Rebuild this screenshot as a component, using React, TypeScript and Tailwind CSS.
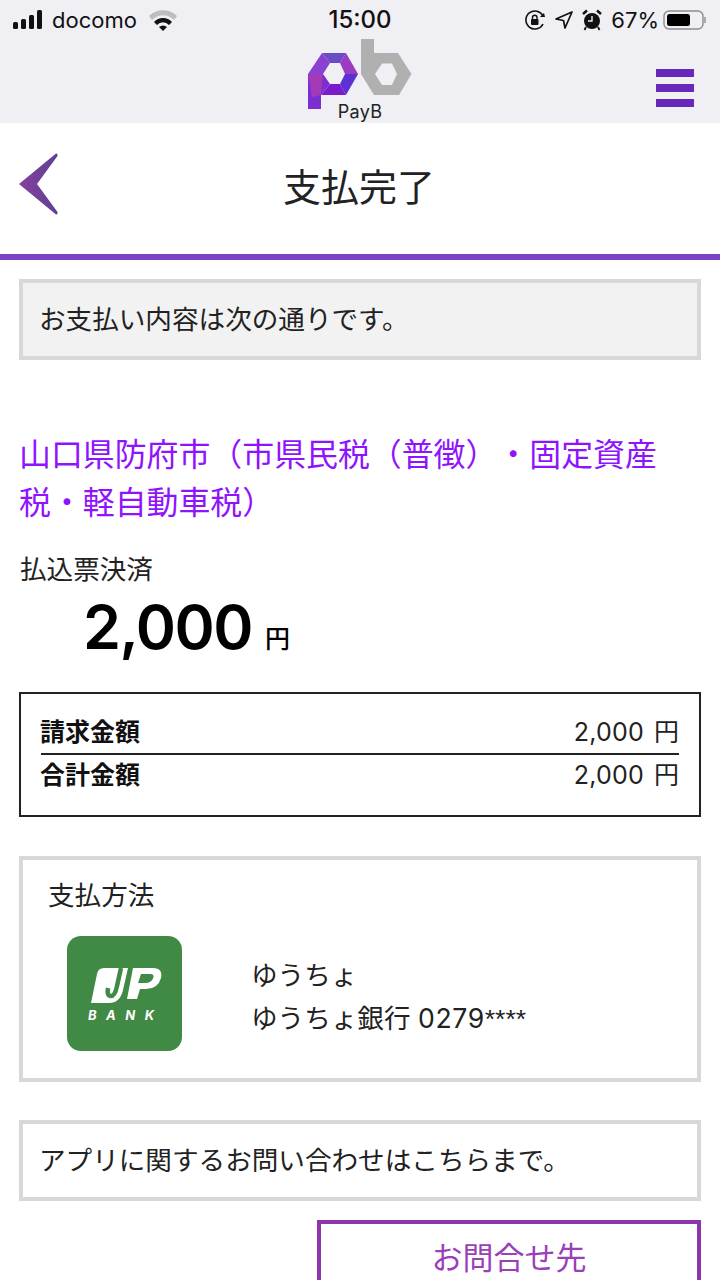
const jp = "font-['Inter','Noto_Sans_CJK_JP',sans-serif] [text-spacing-trim:space-all]";

function StatusBar() {
  return (
    <div className="flex h-[40px] items-center justify-between pl-[13px] pr-[13px] text-[22px] text-[#111]">
      <div className="flex w-[270px] items-center">
        <svg width="32" height="20" viewBox="0 0 32 20" className="mr-[7px]">
          <rect x="0" y="12" width="5" height="7" rx="1.5" fill="#111" />
          <rect x="8" y="9" width="5" height="10" rx="1.5" fill="#111" />
          <rect x="16" y="5" width="5" height="14" rx="1.5" fill="#111" />
          <rect x="24" y="0" width="5" height="19" rx="1.5" fill="#111" />
        </svg>
        <span className="mr-[11px] leading-none">docomo</span>
        <svg width="30" height="22" viewBox="0 0 30 22">
          <path d="M1 7 A20 20 0 0 1 29 7 L26 11 A15 15 0 0 0 4 11 Z" fill="#bdbdbd" />
          <path d="M6 13 A12 12 0 0 1 24 13 L21 16 A8 8 0 0 0 9 16 Z" fill="#111" />
          <path d="M11 18 A6 6 0 0 1 19 18 L15 22 Z" fill="#111" />
        </svg>
      </div>
      <div className="text-[24px] font-medium leading-none">15:00</div>
      <div className="flex w-[270px] items-center justify-end">
        <svg width="22" height="22" viewBox="0 0 22 22" className="mr-[8px]">
          <path d="M19 15 A9 9 0 1 1 19 7" fill="none" stroke="#111" strokeWidth="1.6" />
          <path d="M16 8 L21 8 L20 4 Z" fill="#111" />
          <rect x="7" y="10" width="7.5" height="6" rx="1" fill="#111" />
          <path d="M8.5 10 V8.5 A2.2 2.2 0 0 1 13 8.5 V10" fill="none" stroke="#111" strokeWidth="1.4" />
        </svg>
        <svg width="20" height="20" viewBox="0 0 20 20" className="mr-[8px]">
          <path d="M18 2 L11 18 L9.5 10.5 L2 9 Z" fill="none" stroke="#111" strokeWidth="1.7" strokeLinejoin="round" />
        </svg>
        <svg width="20" height="22" viewBox="0 0 20 22" className="mr-[9px]">
          <circle cx="10" cy="12" r="8" fill="#111" />
          <path d="M1 5 L5 1.5 M19 5 L15 1.5" stroke="#111" strokeWidth="2.4" />
          <path d="M10 7 V12 H6" fill="none" stroke="#efeff4" strokeWidth="1.4" />
          <path d="M4 18 L2.5 21 M16 18 L17.5 21" stroke="#111" strokeWidth="1.8" />
        </svg>
        <span className="mr-[4px] leading-none">67%</span>
        <svg width="44" height="22" viewBox="0 0 44 22">
          <rect x="1" y="2" width="39" height="18" rx="5" fill="none" stroke="#8e8e8e" strokeWidth="1.4" />
          <rect x="4" y="5" width="23" height="12" rx="2.5" fill="#000" />
          <path d="M42 8 V14" stroke="#9a9a9a" strokeWidth="1.6" />
        </svg>
      </div>
    </div>
  );
}

function Logo() {
  return (
    <div className="relative h-[84px] w-[106px]">
      <svg width="106" height="72" viewBox="0 0 106 72">
        {/* p, made of flat facets */}
        <polygon points="15,14 39,14 33,24 23,24" fill="#6a4cc6" />
        <polygon points="39,14 51,35 38,35 33,24" fill="#9a3cc2" />
        <polygon points="51,35 39,56 33,45 38,35" fill="#5c30d2" />
        <polygon points="39,56 14,56 23,45 33,45" fill="#7a1ccc" />
        <polygon points="15,14 23,24 16,35 1,35" fill="#8a40d0" />
        <polygon points="1,35 16,35 23,45 14,56 14,70 1,70" fill="#7a2fd0" />
        <polygon points="1,35 16,35 14,56 5,58" fill="#a53ab8" />
        {/* b */}
        <path
          fillRule="evenodd"
          d="M54 0 H67 V14 H91 L104.5 35 L92 56 H67 L54 35 Z M68 35 L75 46 H85 L90 35 L85 24.5 H75 Z"
          fill="#b0b0b0"
        />
      </svg>
      <div className="absolute left-0 right-0 top-[63px] text-center font-['Inter',sans-serif] text-[18px] leading-[20px] tracking-[0.3px] text-[#222]">
        PayB
      </div>
    </div>
  );
}

function Info({ children, grey }: { children: React.ReactNode; grey?: boolean }) {
  return (
    <div className={`flex h-[81px] items-center border-4 border-[#d8d8d8] pl-[16px] text-[26.6px] text-[#222] ${grey ? "bg-[#f2f2f2]" : "bg-white"}`}>
      {children}
    </div>
  );
}

export default function App() {
  return (
    <div className={`h-[1280px] w-[720px] overflow-hidden bg-white ${jp}`}>
      <div className="h-[123px] bg-[#efeff4]">
        <StatusBar />
        <div className="relative flex justify-center">
          <div className="absolute left-[307px] top-[-1px]">
            <Logo />
          </div>
          <div className="absolute right-[26px] top-[29px] flex w-[38px] flex-col gap-[7px]">
            <div className="h-[8px] bg-[#6528b8]" />
            <div className="h-[8px] bg-[#6528b8]" />
            <div className="h-[8px] bg-[#6528b8]" />
          </div>
        </div>
      </div>

      <div className="relative flex h-[137px] items-center justify-center border-b-[6px] border-[#7b44c2] pb-[3px] pr-[2px] text-[38px] text-[#222]">
        <svg width="40" height="62" viewBox="0 0 40 62" className="absolute left-[19px] top-[30px]">
          <defs>
            <linearGradient id="bk" x1="0" y1="0" x2="1" y2="0">
              <stop offset="0" stopColor="#88409a" />
              <stop offset="1" stopColor="#5f4097" />
            </linearGradient>
          </defs>
          <path d="M0 31 L37 0.5 Q39 0.5 38.5 3 L18 31 L38.5 59 Q39 61.5 37 61.5 Z" fill="url(#bk)" />
        </svg>
        支払完了
      </div>

      <div className="flex flex-col px-[19px] pt-[19px]">
        <Info grey>お支払い内容は次の通りです。</Info>

        <div className="mt-[71px] text-[31.9px] leading-[48px] text-[#9013fe]">
          山口県防府市（市県民税（普徴）・固定資産
          <br />
          税・軽自動車税）
        </div>

        <div className="mt-[24px] pl-[1px] text-[26.6px] leading-[36px] text-[#222]">払込票決済</div>
        <div className="ml-[64px] mt-[5px] flex h-[70px] items-center text-black">
          <span className="font-['Inter',sans-serif] text-[61px] font-semibold leading-none tracking-[-1.5px]">2,000</span>
          <span className="ml-[13px] mt-[24px] text-[25px] font-medium leading-none">円</span>
        </div>

        <div className="mt-[30px] flex h-[125px] flex-col justify-center border-2 border-[#222] px-[20px] text-[25px] text-[#222]">
          <div className="flex h-[42px] items-center justify-between border-b-2 border-[#222]">
            <span className="ml-[-1px] font-bold text-[#111]">請求金額</span>
            <span className="flex gap-[10px]"><span className="tracking-[0.2px]">2,000</span><span>円</span></span>
          </div>
          <div className="flex h-[41px] items-center justify-between">
            <span className="ml-[-1px] font-bold text-[#111]">合計金額</span>
            <span className="flex gap-[10px]"><span className="tracking-[0.2px]">2,000</span><span>円</span></span>
          </div>
        </div>

        <div className="mt-[39px] h-[226px] border-4 border-[#d8d8d8] pl-[25px] pt-[16px] text-[26.6px] leading-[38px] text-[#222]">
          <div>支払方法</div>
          <div className="mt-[22px] flex items-center pl-[19px]">
            <div className="relative h-[115px] w-[115px] rounded-[14px] bg-[#418a46]">
              <svg width="115" height="115" viewBox="0 0 115 115">
                <path d="M37 32 H61 L56 54 Q53 67 42 67 H24 L30 38 Q31 32 37 32 Z" fill="#fff" />
                <path d="M54 32 L50 50 Q48 60 44 60 Q39.5 60 41 52" fill="none" stroke="#418a46" strokeWidth="4.5" />
                <path
                  fillRule="evenodd"
                  d="M66 32 H86 Q96 32 94 42 Q91 53 79 53 H73 L70 63 H60 Z M74 38 L71 47 H78 Q85 47 86.5 41 Q87 38 83 38 Z"
                  fill="#fff"
                />
              </svg>
              <div className="absolute left-[21px] top-[72px] font-['Inter',sans-serif] text-[13px] font-bold italic leading-[14px] tracking-[9.5px] text-white">
                BANK
              </div>
            </div>
            <div className="ml-[69px] mt-[7px] leading-[43px]">
              <div>ゆうちょ</div>
              <div>
                ゆうちょ銀行 <span className="tracking-[0.6px]">0279</span>
                <span className="font-['Liberation_Sans',sans-serif]">****</span>
              </div>
            </div>
          </div>
        </div>

        <div className="mt-[38px]">
          <Info>アプリに関するお問い合わせはこちらまで。</Info>
        </div>

        <div className="ml-[298px] mt-[19px] flex h-[90px] w-[384px] items-start justify-center border-4 border-[#8e35ae] pt-[12px] text-[31px] leading-[44px] text-[#9a3fb8]">
          お問合せ先
        </div>
      </div>
    </div>
  );
}
